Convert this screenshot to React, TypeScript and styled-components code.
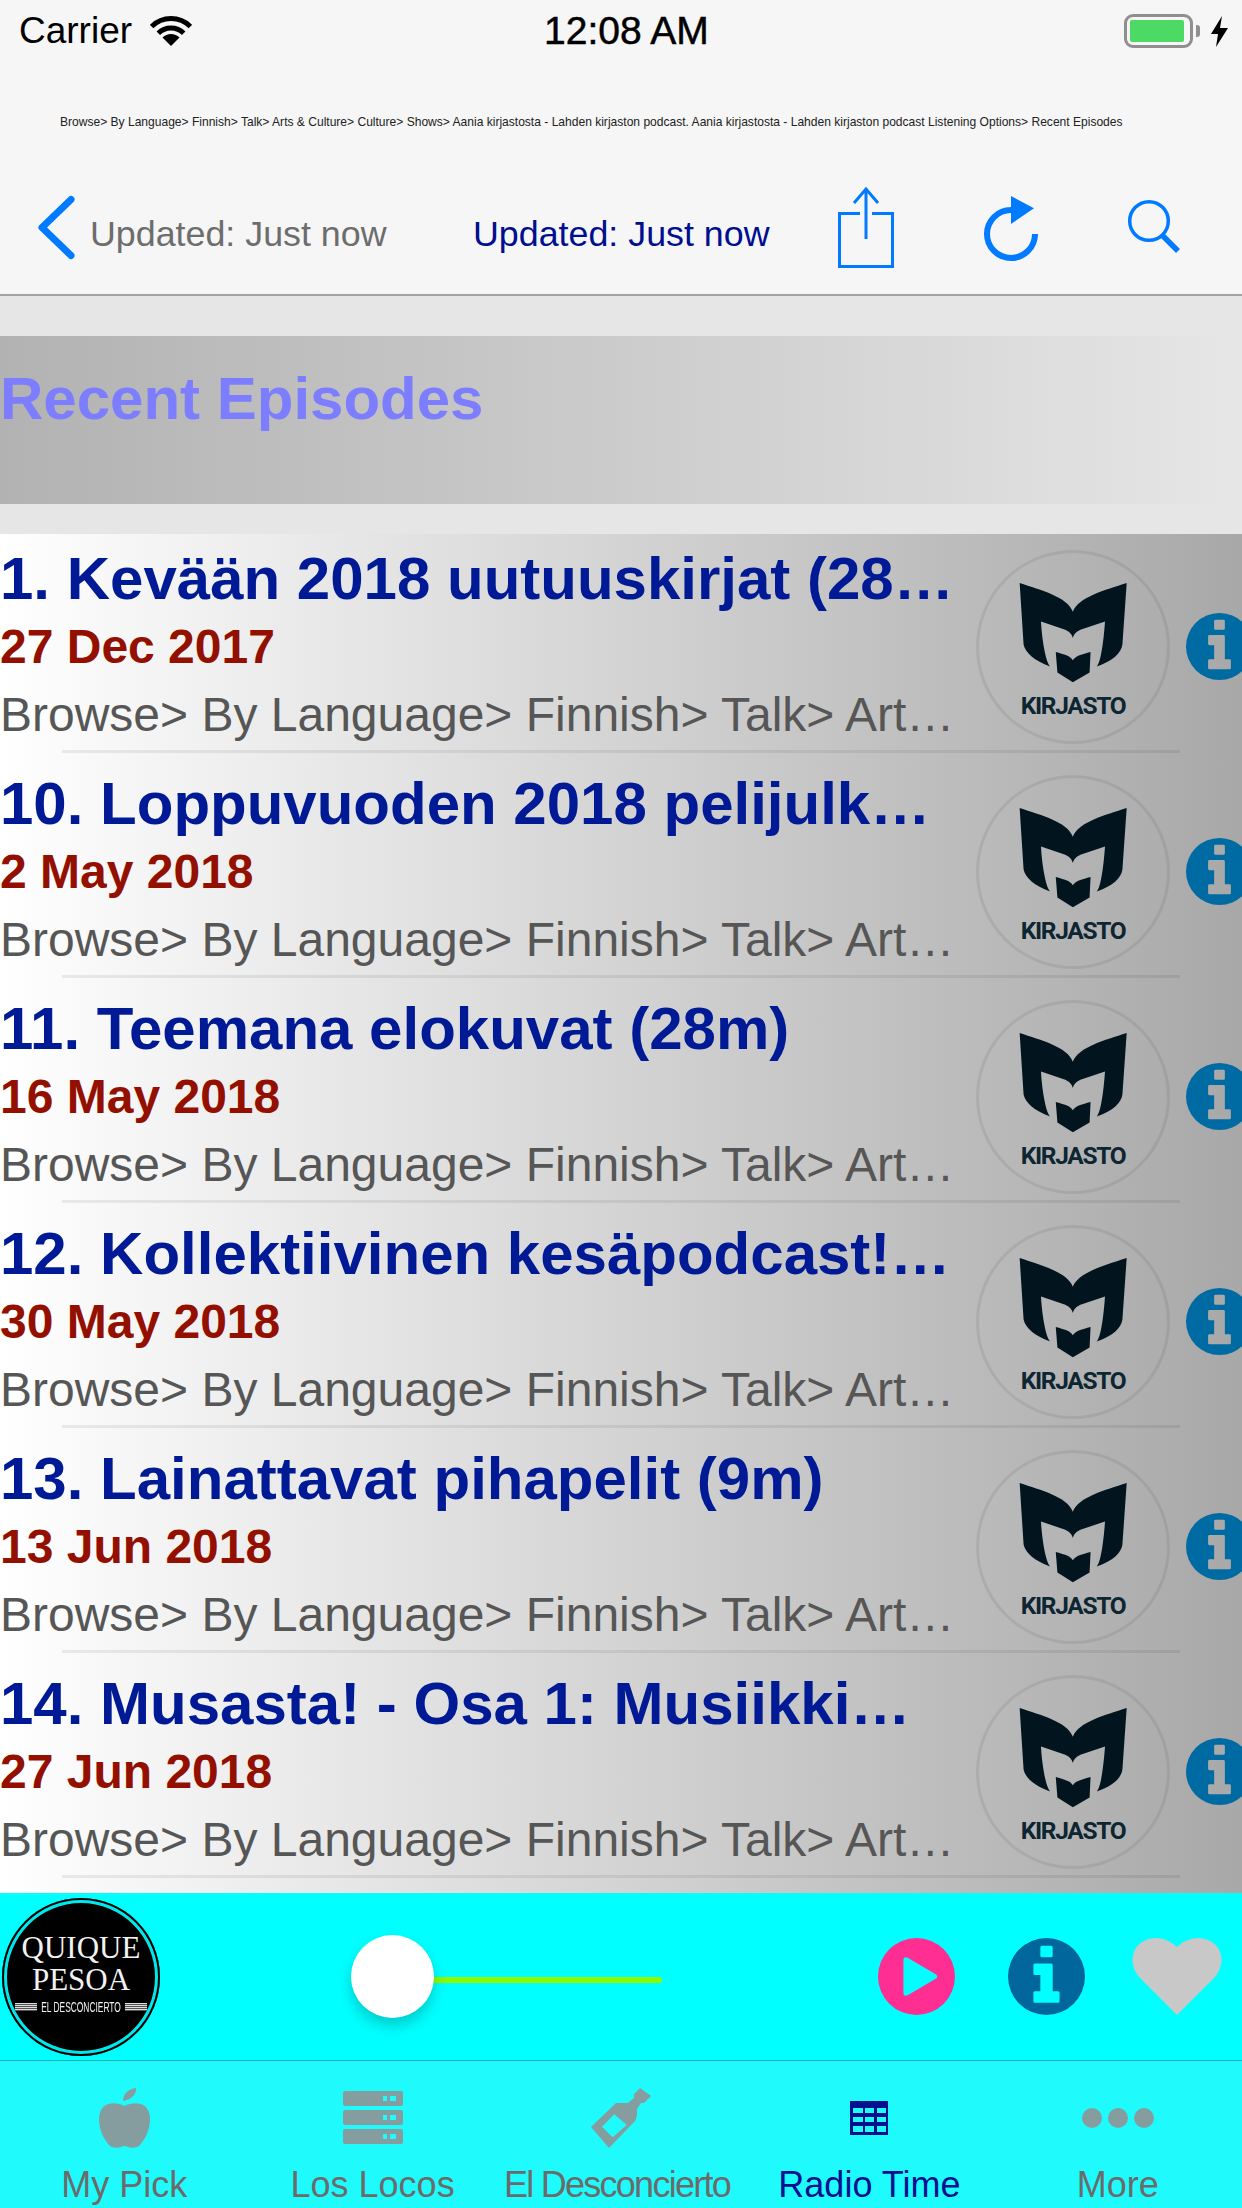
import React from 'react';
import styled, { createGlobalStyle } from 'styled-components';

const episodes = [
  { title: '1. Kevään 2018 uutuuskirjat (28m)', date: '27 Dec 2017' },
  { title: '10. Loppuvuoden 2018 pelijulkaisut (30m)', date: '2 May 2018' },
  { title: '11. Teemana elokuvat (28m)', date: '16 May 2018' },
  { title: '12. Kollektiivinen kesäpodcast! (25m)', date: '30 May 2018' },
  { title: '13. Lainattavat pihapelit (9m)', date: '13 Jun 2018' },
  { title: '14. Musasta! - Osa 1: Musiikki…', date: '27 Jun 2018' },
];

const crumbs =
  'Browse> By Language> Finnish> Talk> Arts & Culture> Culture> Shows> Aania kirjastosta - Lahden kirjaston podcast';

const GlobalStyle = createGlobalStyle`
  html, body {
    margin: 0;
    padding: 0;
    background: #e6e6e6;
  }
  * {
    box-sizing: border-box;
  }
`;

const Page = styled.div`
  width: 1242px;
  height: 2208px;
  overflow: hidden;
  display: flex;
  flex-direction: column;
  background: #e6e6e6;
  font-family: 'Liberation Sans', Arial, sans-serif;
`;

const NavBar = styled.header`
  height: 296px;
  flex-shrink: 0;
  background: #f6f6f6;
  border-bottom: 2px solid #a3a3a3;
`;

const StatusBar = styled.div`
  height: 60px;
  display: flex;
  align-items: center;
  padding: 2px 14px 0 19px;
  color: #000;
  font-size: 37px;
`;

const Carrier = styled.span`
  width: 131px;
`;

const WifiIcon = styled.svg`
  width: 42px;
  height: 30px;
`;

const Clock = styled.span`
  margin-left: 352px;
  width: 580px;
  font-size: 39px;
  -webkit-text-stroke: 0.5px #000;
`;

const Battery = styled.div`
  width: 69px;
  height: 34px;
  border: 3px solid #8f8f8f;
  border-radius: 9px;
  padding: 3px;
  position: relative;
  &::after {
    content: '';
    position: absolute;
    right: -10px;
    top: 8px;
    width: 4px;
    height: 12px;
    border-radius: 0 3px 3px 0;
    background: #8f8f8f;
  }
`;

const BatteryLevel = styled.div`
  height: 100%;
  width: 54px;
  background: #4cd964;
  border-radius: 2px;
`;

const BoltIcon = styled.svg`
  width: 17px;
  height: 31px;
  margin-left: 18px;
`;

const Breadcrumb = styled.div`
  height: 108px;
  padding: 50px 0 0 60px;
  font-size: 12.05px;
  line-height: 24px;
  color: #222;
  white-space: nowrap;
`;

const Toolbar = styled.div`
  height: 120px;
  display: flex;
  align-items: center;
`;

const BackGroup = styled.div`
  width: 473px;
  display: flex;
  align-items: center;
  padding-left: 35px;
`;

const BackIcon = styled.svg`
  width: 45px;
  height: 70px;
  margin-right: 10px;
`;

const UpdatedText = styled.span<{ $active?: boolean }>`
  font-size: 35.8px;
  margin-top: 12px;
  color: ${p => (p.$active ? '#000f8f' : '#6d6d6d')};
`;

const UpdatedSlot = styled.div`
  width: 362px;
  display: flex;
`;

const ToolIcon = styled.svg<{ $w: number; $h: number; $gap: number }>`
  width: ${p => p.$w}px;
  height: ${p => p.$h}px;
  margin-right: ${p => p.$gap}px;
  flex-shrink: 0;
  fill: none;
  stroke: #007aff;
`;

const TitleBand = styled.section`
  height: 168px;
  margin-top: 40px;
  padding-top: 28px;
  background: linear-gradient(90deg, #b2b2b2, #e6e6e6);
`;

const BandTitle = styled.h1`
  margin: 0;
  font-size: 60px;
  line-height: 70px;
  font-weight: 700;
  color: #7d7dff;
`;

const EpisodeList = styled.main`
  margin-top: 30px;
  height: 1359px;
  flex-shrink: 0;
  overflow: hidden;
  background: linear-gradient(90deg, #ffffff, #a8a8a8);
`;

const Row = styled.article`
  height: 225px;
  position: relative;
  display: flex;
  align-items: center;
  overflow: hidden;
  &::after {
    content: '';
    position: absolute;
    left: 62px;
    width: 1118px;
    bottom: 6px;
    height: 3px;
    background: rgba(0, 0, 0, 0.07);
  }
`;

const RowText = styled.div`
  width: 955px;
  flex-shrink: 0;
  align-self: flex-start;
  padding-top: 10px;
`;

const OneLine = styled.div`
  white-space: nowrap;
  overflow: hidden;
  text-overflow: ellipsis;
`;

const EpisodeTitle = styled(OneLine)`
  font-size: 60px;
  line-height: 69px;
  font-weight: 700;
  color: #001a96;
`;

const EpisodeDate = styled(OneLine)`
  font-size: 48px;
  line-height: 53px;
  margin-top: 7px;
  font-weight: 700;
  color: #930f00;
`;

const EpisodePath = styled(OneLine)`
  font-size: 48px;
  line-height: 53px;
  margin-top: 15px;
  color: #565656;
`;

const Badge = styled.div`
  width: 194px;
  height: 194px;
  margin-left: 21px;
  flex-shrink: 0;
  border-radius: 50%;
  border: 3px solid rgba(0, 0, 0, 0.07);
  position: relative;
  display: flex;
  flex-direction: column;
  align-items: center;
`;

const BadgeMark = styled.svg`
  width: 110px;
  height: 102px;
  margin-top: 29px;
  fill: #02151f;
`;

const BadgeLabel = styled.span`
  margin-top: 10px;
  font-family: Roboto, 'Liberation Sans', sans-serif;
  font-weight: 700;
  font-size: 24.5px;
  line-height: 24px;
  letter-spacing: -1.3px;
  color: #0e2532;
`;

const RoundIcon = styled.svg<{ $size: number; $color: string; $left: number }>`
  width: ${p => p.$size}px;
  height: ${p => p.$size}px;
  margin-left: ${p => p.$left}px;
  flex-shrink: 0;
  fill: ${p => p.$color};
`;

const Player = styled.section`
  height: 167px;
  flex-shrink: 0;
  background: #00ffff;
  display: flex;
  align-items: center;
  padding-left: 2px;
`;

const ShowLogo = styled.div`
  width: 158px;
  height: 158px;
  flex-shrink: 0;
  border-radius: 50%;
  background: #000;
  box-shadow: inset 0 0 0 2px #000, inset 0 0 0 5px #00e8ec;
  display: flex;
  flex-direction: column;
  align-items: center;
  padding-top: 34px;
  color: #f2f2f2;
  font-family: 'Liberation Serif', 'Times New Roman', serif;
`;

const LogoLine = styled.span`
  font-size: 31px;
  line-height: 32px;
`;

const LogoStrap = styled.div`
  display: flex;
  align-items: center;
  justify-content: space-between;
  width: 132px;
  height: 12px;
  margin-top: 5px;
`;

const Stripes = styled.i`
  width: 22px;
  height: 8px;
  background: repeating-linear-gradient(180deg, #dcdcdc 0 1px, #555 1px 2px);
`;

const StrapText = styled.span`
  font-family: 'Liberation Sans', sans-serif;
  font-size: 15px;
  white-space: nowrap;
  width: 78px;
  display: flex;
  justify-content: center;
  transform: scaleX(0.56);
`;

const Slider = styled.div`
  width: 311px;
  margin-left: 191px;
  height: 83px;
  position: relative;
  display: flex;
  align-items: center;
`;

const SliderTrack = styled.div`
  width: 100%;
  height: 6px;
  margin-top: 7px;
  border-radius: 3px;
  background: #8ef900;
`;

const SliderThumb = styled.div`
  position: absolute;
  left: 0;
  top: 0;
  width: 83px;
  height: 83px;
  border-radius: 50%;
  background: #fff;
  box-shadow: 0 8px 14px rgba(0, 0, 0, 0.2);
`;

const HeartIcon = styled.svg`
  width: 90px;
  height: 77px;
  margin-left: 47px;
  fill: #c8c8c8;
`;

const TabBar = styled.nav`
  flex: 1;
  display: grid;
  grid-template-columns: repeat(5, 1fr);
  background: #1ffbfd;
  border-top: 1px solid #17b3b5;
`;

const Tab = styled.div<{ $active?: boolean }>`
  display: flex;
  flex-direction: column;
  align-items: center;
  color: ${p => (p.$active ? '#00108f' : '#6b6b6b')};
  fill: ${p => (p.$active ? '#00108f' : '#869d9f')};
`;

const TabIconSlot = styled.div`
  height: 60px;
  margin-top: 27px;
  display: flex;
  align-items: center;
  justify-content: center;
  filter: blur(0.5px);
`;

const TabLabel = styled.span<{ $tight?: boolean }>`
  margin-top: 16px;
  margin-right: ${p => (p.$tight ? '8px' : '0')};
  font-size: 36px;
  line-height: 42px;
  white-space: nowrap;
  letter-spacing: ${p => (p.$tight ? '-1.75px' : '0')};
`;

const infoPath =
  'M50 0A50 50 0 1 0 50 100A50 50 0 1 0 50 0ZM44 10H56Q58 10 58 12V23Q58 25 56 25H44Q42 25 42 23V12Q42 10 44 10ZM35 33H56Q58 33 58 35V69H65Q67 69 67 71V82Q67 84 65 84H35Q33 84 33 82V71Q33 69 35 69H42V48H35Q33 48 33 46V35Q33 33 35 33Z';

const InfoIcon: React.FC<{ size: number; color: string; left: number }> = ({ size, color, left }) => (
  <RoundIcon $size={size} $color={color} $left={left} viewBox="0 0 100 100">
    <path fillRule="evenodd" d={infoPath} />
  </RoundIcon>
);

const AppleIcon = () => (
  <svg width="51" height="60" viewBox="0 0 51 60">
    <path d="M25.5 18C20 15 14 14.5 9 16C3 18 0 24 0 31C0 42 5 52 11 58C14 60 19 60 22 59Q25.5 57 29 59C32 60 37 60 40 58C46 52 51 42 51 31C51 24 48 18 42 16C37 14.5 31 15 25.5 18Z" />
    <path d="M24 13C24 6 29 1 37 0C38 5 33 12 24 13Z" />
  </svg>
);

const ServerIcon = () => (
  <svg width="60" height="55" viewBox="0 0 60 55">
    {[0, 19, 38].map(y => (
      <path
        key={y}
        fillRule="evenodd"
        d={`M2 ${y}H58Q60 ${y} 60 ${y + 2}V${y + 13}Q60 ${y + 15} 58 ${y + 15}H2Q0 ${y + 15} 0 ${y + 13}V${y + 2}Q0 ${y} 2 ${y}ZM40 ${y + 5}V${y + 10}H44V${y + 5}ZM47 ${y + 5}V${y + 10}H53V${y + 5}Z`}
      />
    ))}
  </svg>
);

const BottleIcon = () => (
  <svg width="60" height="60" viewBox="0 0 60 60">
    <path
      fillRule="evenodd"
      d="M49 0L60 8L53 15L50 15L46 21V26Q46 30 44 33L18 60L0 39L25 15H37L43 10V6ZM23.3 26.3L11 38.7L21.7 49.3L35.7 37Z"
    />
  </svg>
);

const GridIcon = () => (
  <svg width="38" height="34" viewBox="0 0 38 34">
    <path
      fillRule="evenodd"
      d="M0 0H38V34H0ZM3 7V12H13V7ZM15 7V12H24V7ZM27 7V12H36V7ZM3 16V21H13V16ZM15 16V21H24V16ZM27 16V21H36V16ZM3 25V31H13V25ZM15 25V31H24V25ZM27 25V31H36V25Z"
    />
  </svg>
);

const DotsIcon = () => (
  <svg width="72" height="20" viewBox="0 0 72 20">
    <circle cx="10" cy="10" r="10" />
    <circle cx="36" cy="10" r="10" />
    <circle cx="62" cy="10" r="10" />
  </svg>
);

const tabs = [
  { label: 'My Pick', icon: <AppleIcon /> },
  { label: 'Los Locos', icon: <ServerIcon /> },
  { label: 'El Desconcierto', icon: <BottleIcon />, tight: true },
  { label: 'Radio Time', icon: <GridIcon />, active: true },
  { label: 'More', icon: <DotsIcon /> },
];

const App: React.FC = () => {
  return (
    <Page>
      <GlobalStyle />
      <NavBar>
        <StatusBar>
          <Carrier>Carrier</Carrier>
          <WifiIcon viewBox="0 0 42 30">
            <path d="M1.6 10.6A27.5 27.5 0 0 1 40.4 10.6" fill="none" stroke="#000" strokeWidth="5" />
            <path d="M8.3 17.3A18 18 0 0 1 33.7 17.3" fill="none" stroke="#000" strokeWidth="5" />
            <path d="M21 30L12.5 21.5A12 12 0 0 1 29.5 21.5Z" />
          </WifiIcon>
          <Clock>12:08 AM</Clock>
          <Battery>
            <BatteryLevel />
          </Battery>
          <BoltIcon viewBox="0 0 17 31">
            <path d="M11 0L0 18H7L5 31L17 12H9Z" />
          </BoltIcon>
        </StatusBar>
        <Breadcrumb>
          {crumbs}. Aania kirjastosta - Lahden kirjaston podcast Listening Options&gt; Recent Episodes
        </Breadcrumb>
        <Toolbar>
          <BackGroup>
            <BackIcon viewBox="0 0 45 70">
              <path d="M36 6.5L7 34.5L36 62.5" fill="none" stroke="#007aff" strokeWidth="7" strokeLinecap="round" strokeLinejoin="round" />
            </BackIcon>
            <UpdatedText>Updated: Just now</UpdatedText>
          </BackGroup>
          <UpdatedSlot>
            <UpdatedText $active>Updated: Just now</UpdatedText>
          </UpdatedSlot>
          <ToolIcon $w={62} $h={85} $gap={83} viewBox="0 0 62 85" strokeWidth="3">
            <path d="M25 27.5H4.5V80.5H57.5V27.5H37M31 3V53M19 17L31 3L43 17" />
          </ToolIcon>
          <ToolIcon $w={62} $h={75} $gap={83} viewBox="0 0 62 75" strokeWidth="6">
            <path d="M31 19A24 24 0 1 0 55 43" />
            <path d="M31 5L54 17.3L31 33Z" fill="#007aff" stroke="none" />
          </ToolIcon>
          <ToolIcon $w={62} $h={62} $gap={0} viewBox="0 0 62 62" strokeWidth="3.5">
            <circle cx="24" cy="24" r="19.3" />
            <path d="M37 38L53 54" strokeWidth="5.5" />
          </ToolIcon>
        </Toolbar>
      </NavBar>

      <TitleBand>
        <BandTitle>Recent Episodes</BandTitle>
      </TitleBand>

      <EpisodeList>
        {episodes.map(ep => (
          <Row key={ep.title}>
            <RowText>
              <EpisodeTitle>{ep.title}</EpisodeTitle>
              <EpisodeDate>{ep.date}</EpisodeDate>
              <EpisodePath>{crumbs}</EpisodePath>
            </RowText>
            <Badge>
              <BadgeMark viewBox="350 180 335 310">
                <path d="M355 183C420 205 500 225 517 270C535 225 615 205 681 183L668 370C665 395 640 420 590 437C605 420 612 340 615 300L540 325C525 332 520 340 517 350C514 340 509 332 494 325L420 300C422 340 432 420 448 437C400 420 372 395 367 370Z" />
                <path d="M465 393C490 400 510 405 517 418C525 405 545 400 571 393L568 455L517 485L470 455Z" />
              </BadgeMark>
              <BadgeLabel>KIRJASTO</BadgeLabel>
            </Badge>
            <InfoIcon size={67} color="#006ba3" left={16} />
          </Row>
        ))}
      </EpisodeList>

      <Player>
        <ShowLogo>
          <LogoLine>QUIQUE</LogoLine>
          <LogoLine>PESOA</LogoLine>
          <LogoStrap>
            <Stripes />
            <StrapText>EL DESCONCIERTO</StrapText>
            <Stripes />
          </LogoStrap>
        </ShowLogo>
        <Slider>
          <SliderTrack />
          <SliderThumb />
        </Slider>
        <RoundIcon $size={77} $color="#ff2e93" $left={216} viewBox="0 0 100 100">
          <path
            fillRule="evenodd"
            d="M50 0A50 50 0 1 0 50 100A50 50 0 1 0 50 0ZM33 30Q33 23 39 26L75 47Q79 50 75 53L39 74Q33 77 33 70Z"
          />
        </RoundIcon>
        <InfoIcon size={77} color="#00669c" left={53} />
        <HeartIcon viewBox="0 0 90 77">
          <path d="M45 77L8 40C-3 28 -2 10 12 3C24 -3 36 1 45 9C54 1 66 -3 78 3C92 10 93 28 82 40Z" />
        </HeartIcon>
      </Player>

      <TabBar>
        {tabs.map(tab => (
          <Tab key={tab.label} $active={tab.active}>
            <TabIconSlot>{tab.icon}</TabIconSlot>
            <TabLabel $tight={tab.tight}>{tab.label}</TabLabel>
          </Tab>
        ))}
      </TabBar>
    </Page>
  );
};

export default App;
